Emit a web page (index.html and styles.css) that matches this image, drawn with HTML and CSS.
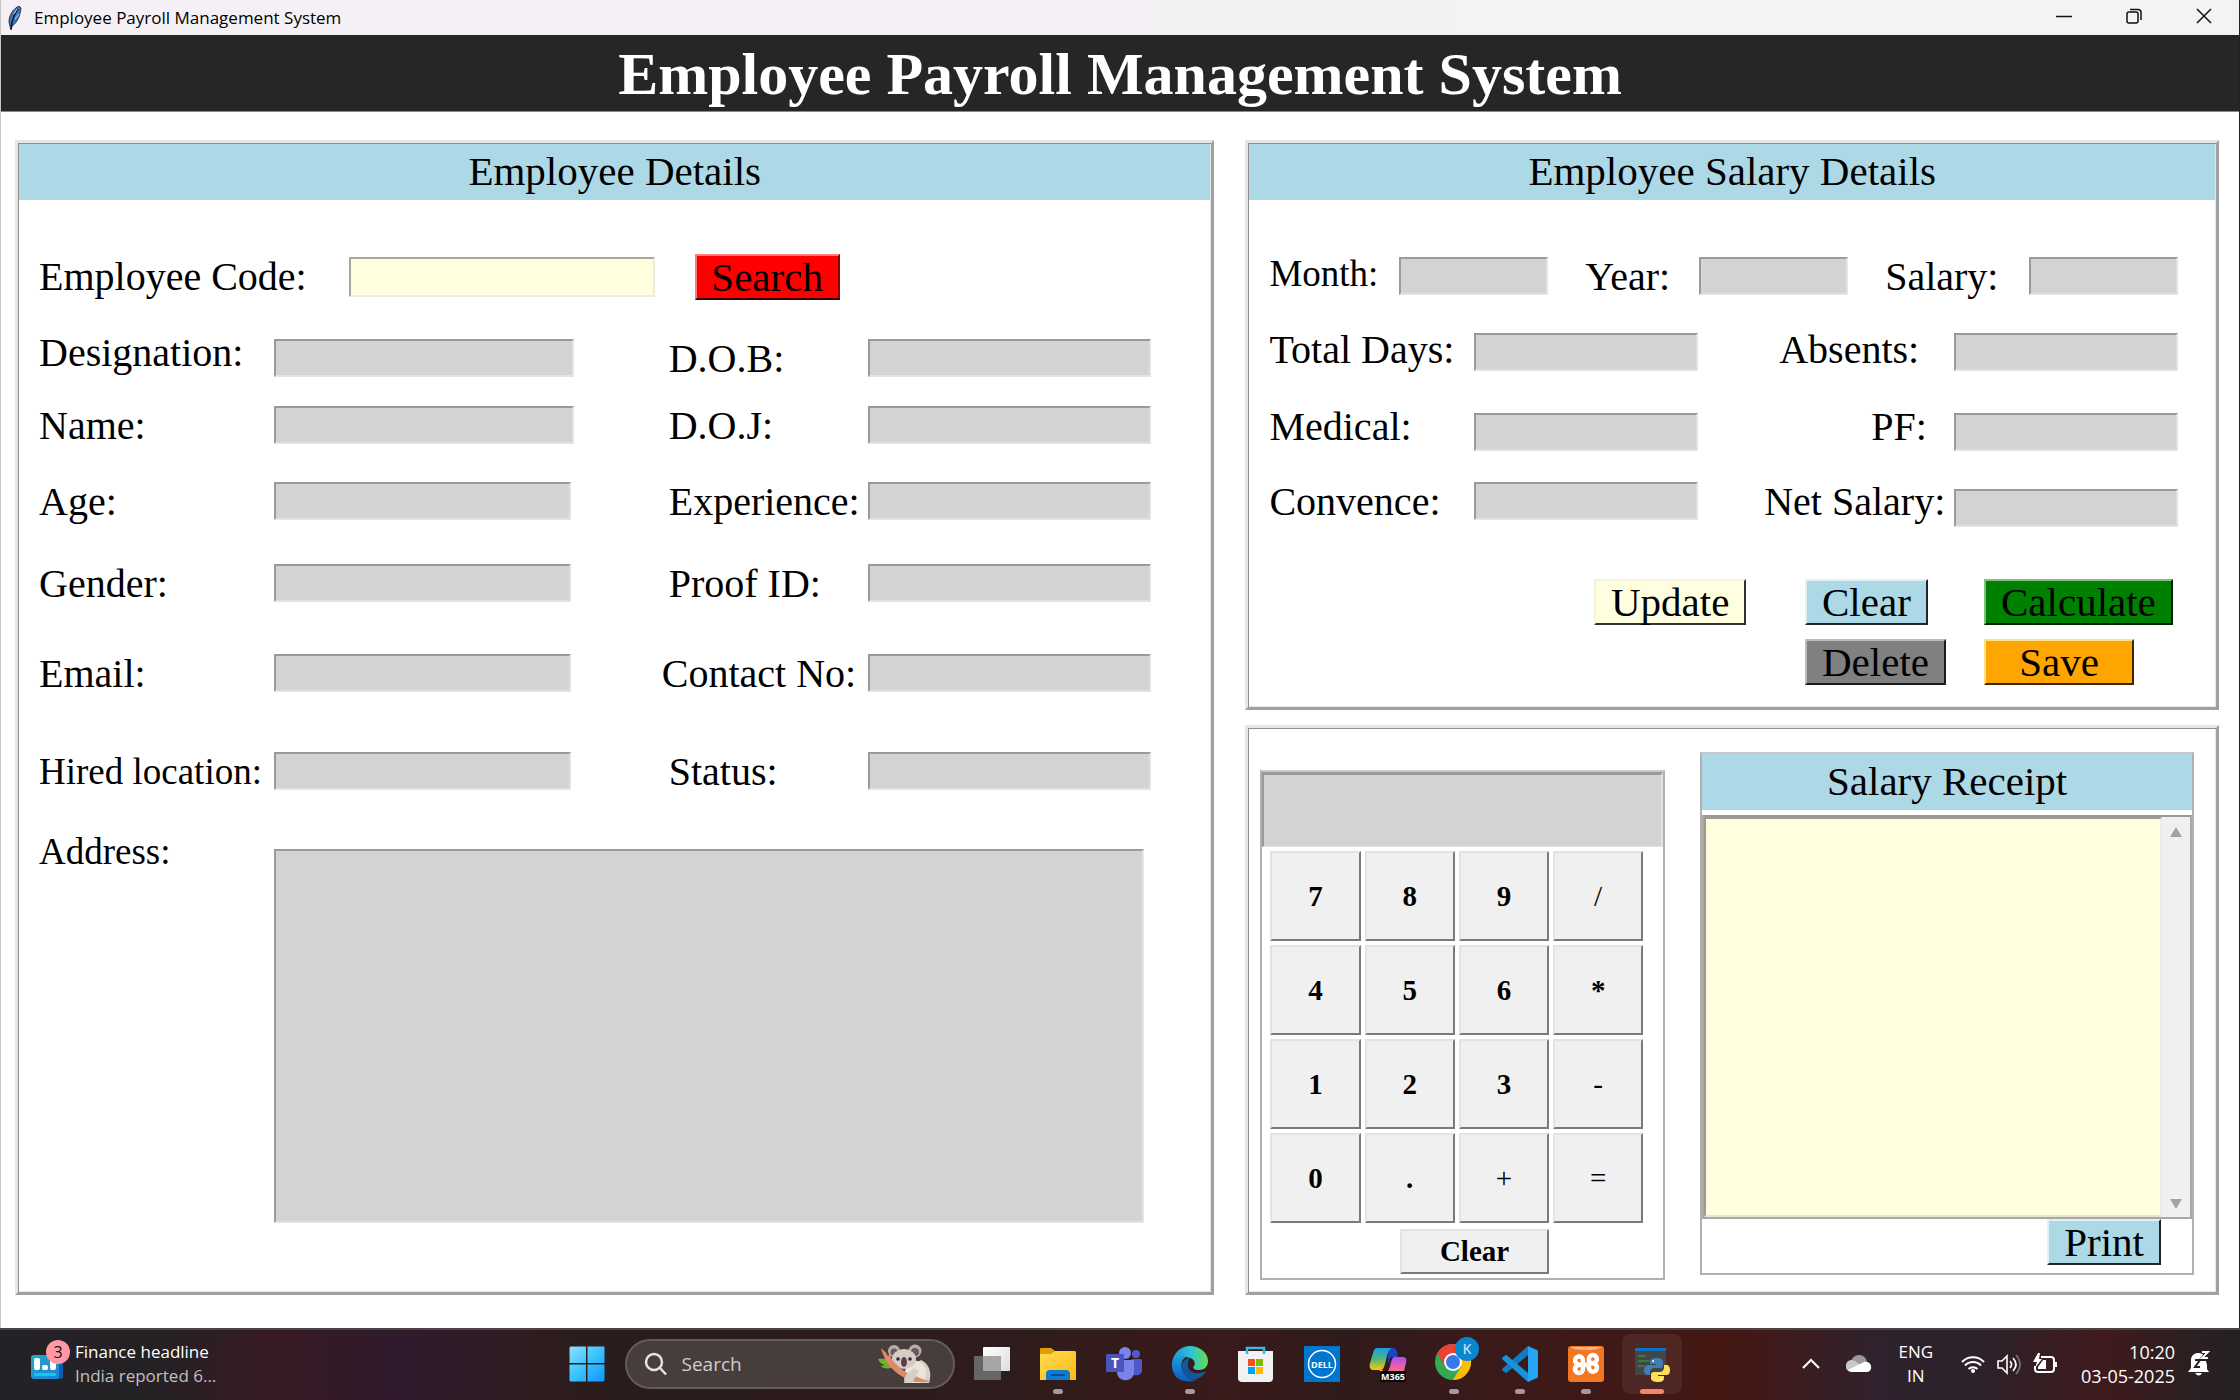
FILE: index.html
```html
<!DOCTYPE html>
<html lang="en">
<head>
<meta charset="utf-8">
<title>Employee Payroll Management System</title>
<link rel="stylesheet" href="styles.css">
</head>
<body>
<div class="window">
  <div class="titlebar">
    <svg class="feather" viewBox="0 0 16 24"><path d="M12 0C6 3 2 9 2 16l1 4 1 4 1-4c5-3 8-10 9-18z" fill="#3c79c4" stroke="#2a3340"/><path d="M11 3C7 8 5 14 4 23" fill="none" stroke="#101820" stroke-width="1.5"/><path d="M10 3L7 8M12 8l-4 5" stroke="#b6d4f3"/></svg>
    <span class="titlebar-text">Employee Payroll Management System</span>
    <div class="window-controls">
      <button aria-label="Minimize"><svg viewBox="0 0 16 16"><path d="M0 8.500h16"/></svg></button>
      <button aria-label="Restore"><svg viewBox="0 0 16 16"><rect x="1" y="4" width="11" height="11" rx="2"/><path d="M4 1.500h8a3 3 0 0 1 3 3V12"/></svg></button>
      <button aria-label="Close"><svg viewBox="0 0 16 16"><path d="M1 1l14 14M15 1L1 15"/></svg></button>
    </div>
  </div>

  <h1 class="banner">Employee Payroll Management System</h1>

  <main class="content">
    <section class="panel">
      <h2 class="band">Employee Details</h2>
      <div class="code-row">
        <label for="code">Employee Code:</label>
        <input id="code" class="code-input" type="text">
        <button class="btn red">Search</button>
      </div>
      <div class="details">
        <label class="raised" for="designation">Designation:</label><input id="designation" type="text">
        <label class="second" for="dob">D.O.B:</label><input id="dob" type="text">
        <label for="name">Name:</label><input id="name" type="text">
        <label class="second" for="doj">D.O.J:</label><input id="doj" type="text">
        <label for="age">Age:</label><input id="age" class="narrow" type="text">
        <label class="second" for="experience">Experience:</label><input id="experience" type="text">
        <label for="gender">Gender:</label><input id="gender" class="narrow" type="text">
        <label class="second" for="proof">Proof ID:</label><input id="proof" type="text">
        <label for="email">Email:</label><input id="email" class="narrow" type="text">
        <label class="second wide" for="contact">Contact No:</label><input id="contact" type="text">
        <label class="small" for="hired">Hired location:</label><input id="hired" class="narrow" type="text">
        <label class="second" for="status">Status:</label><input id="status" type="text">
        <label class="small" for="address">Address:</label><textarea id="address" class="address"></textarea>
      </div>
    </section>

    <div class="side">
      <section class="panel">
        <h2 class="band">Employee Salary Details</h2>
        <div class="period">
          <label class="small middle" for="month">Month:</label><input id="month" type="text">
          <label class="next" for="year">Year:</label><input id="year" type="text">
          <label class="next" for="salary">Salary:</label><input id="salary" type="text">
        </div>
        <div class="amounts">
          <label class="middle" for="days">Total Days:</label><input id="days" type="text">
          <label class="middle absents" for="absents">Absents:</label><input id="absents" type="text">
          <label class="raised" for="medical">Medical:</label><input id="medical" type="text">
          <label class="raised pf" for="pf">PF:</label><input id="pf" type="text">
          <label for="convence">Convence:</label><input id="convence" type="text">
          <label class="net" for="net">Net Salary:</label><input id="net" class="lower" type="text">
        </div>
        <div class="actions">
          <button class="btn yellow update">Update</button>
          <button class="btn blue">Clear</button>
          <button class="btn green">Calculate</button>
          <button class="btn gray delete">Delete</button>
          <button class="btn orange save">Save</button>
        </div>
      </section>

      <section class="panel tools">
        <div class="frame calculator">
          <input class="display" type="text" aria-label="Calculator display">
          <div class="keys">
            <button>7</button><button>8</button><button>9</button><button class="sign">/</button>
            <button>4</button><button>5</button><button>6</button><button>*</button>
            <button>1</button><button>2</button><button>3</button><button class="sign">-</button>
            <button>0</button><button>.</button><button class="sign">+</button><button class="sign">=</button>
            <button class="clear">Clear</button>
          </div>
        </div>
        <div class="frame receipt">
          <h2 class="band">Salary Receipt</h2>
          <div class="receipt-box">
            <textarea aria-label="Salary Receipt"></textarea>
            <div class="scrollbar">
              <svg viewBox="0 0 12 10"><path d="M6 0l6 10H0z" fill="#a3a3a3"/></svg>
              <svg viewBox="0 0 12 10"><path d="M0 0h12L6 10z" fill="#a3a3a3"/></svg>
            </div>
          </div>
          <button class="btn blue print">Print</button>
        </div>
      </section>
    </div>
  </main>
</div>

<footer class="taskbar">
  <div class="widget">
    <svg class="news" viewBox="0 0 42 44"><path d="M27 14h4a2 2 0 0 1 2 2v20a3 3 0 0 1-3 3h-4z" fill="#0b5cad"/><rect x="1" y="15" width="28" height="24" rx="3" fill="url(#news)"/><rect x="4" y="18" width="6" height="12" rx="2" fill="#fff"/><rect x="12" y="25" width="6" height="5" rx="2" fill="#fff"/><rect x="20" y="20" width="6" height="10" rx="2" fill="#fff"/><rect x="4" y="33" width="22" height="3" rx="1" fill="#12c8ee"/><circle cx="28" cy="12" r="12" fill="#ff99a4"/><text x="28" y="18" font-size="16" text-anchor="middle" fill="#111">3</text>
      <defs><linearGradient id="news" x1="0" y1="0" x2="1" y2="1"><stop stop-color="#2aa7c4"/><stop offset="1" stop-color="#1b82d8"/></linearGradient></defs></svg>
    <div class="headline"><span>Finance headline</span><span class="muted">India reported 6...</span></div>
  </div>

  <div class="apps">
    <button class="app" aria-label="Start"><svg viewBox="0 0 36 36"><defs><linearGradient id="win" x1="0" y1="0" x2="1" y2="1"><stop stop-color="#8ce2ff"/><stop offset=".5" stop-color="#3ac3fb"/><stop offset="1" stop-color="#0f95ff"/></linearGradient></defs><path d="M1.500.5H17V17H.5V1.500zM18.500.5H35l.5 1V17h-17zM.5 18.500H17v17H1.500l-1-1zM18.500 18.500h17v16l-1 1h-16z" fill="url(#win)"/></svg></button>

    <label class="search">
      <svg class="glass" viewBox="0 0 24 24"><circle cx="10" cy="10" r="8"/><path d="M16 16l6 6.500"/></svg>
      <input type="text" placeholder="Search" aria-label="Search">
      <svg class="koala" viewBox="0 0 56 40"><path d="M1 15c6-1 14 0 18 8-6 2-14 2-15-1l4-1c-4-1-6-3-7-6z" fill="#6cb52d"/><path d="M44 16c9 4 11 14 8 23H28l5-17z" fill="#d8cfc6"/><path d="M33 17c8-2 15 2 16 10 1 6-2 11-8 12H28c-2-7 0-17 5-22z" fill="#ece4da"/><circle cx="17" cy="7" r="6" fill="#b9aea5"/><circle cx="17" cy="8" r="3.500" fill="#685a60"/><circle cx="38" cy="7" r="6.500" fill="#b9aea5"/><circle cx="38" cy="8" r="4" fill="#685a60"/><ellipse cx="27" cy="15" rx="12" ry="10" fill="#d7cdc4"/><path d="M4 4c3 3 5 4 7 8l2-3c0 4 2 7 5 10 5 5 9 8 14 11 8 3 14 5 22 8h-16C24 34 9 24 4 4z" fill="#dd8a6c"/><ellipse cx="27" cy="18" rx="3" ry="5" fill="#5c4245"/><circle cx="21" cy="15" r="1.800" fill="#31253b"/><circle cx="33" cy="15" r="1.800" fill="#31253b"/><path d="M29 31l8-7 5 3-7 12h-8z" fill="#d8cfc6"/></svg>
    </label>

    <button class="app" aria-label="Task view"><svg viewBox="0 0 36 36"><defs><linearGradient id="tv" x1="0" y1="0" x2="1" y2="1"><stop stop-color="#fff"/><stop offset="1" stop-color="#ddd"/></linearGradient></defs><rect x="9" y="1" width="27" height="24" rx="1" fill="url(#tv)"/><rect x="0" y="10" width="27" height="24" rx="1" fill="#666"/><path d="M9 10h18v15H9z" fill="#a5a5a5"/></svg></button>
    <button class="app open" aria-label="File Explorer"><svg viewBox="0 0 36 36"><defs><linearGradient id="fe" x1="0" y1="0" x2="1" y2="1"><stop stop-color="#ffdb57"/><stop offset="1" stop-color="#fdb912"/></linearGradient></defs><path d="M0 3q0-1 1-1h10l4 3v6H0z" fill="#e0a000"/><path d="M0 8h11l4-3h20l1 1v28H0z" fill="url(#fe)"/><path d="M6 34v-6q0-4 4-4h16q4 0 4 4v6z" fill="#0c7bd0"/><path d="M11 29h14" stroke="#0a4d94" stroke-width="2"/></svg></button>
    <button class="app" aria-label="Teams"><svg viewBox="0 0 36 36"><circle cx="30" cy="8" r="4" fill="#5059c9"/><path d="M26 13h8q2 0 2 2v9c0 4-3 6-9 5z" fill="#5059c9"/><circle cx="19" cy="7" r="6" fill="#7b83eb"/><path d="M11 14h17v12c0 11-17 11-17 0z" fill="#7b83eb"/><rect y="8" width="18" height="18" rx="1" fill="#4b53bc"/><text x="9" y="22" font-size="14" font-weight="700" text-anchor="middle" fill="#fff">T</text></svg></button>
    <button class="app open" aria-label="Edge"><svg viewBox="0 0 36 36"><defs><linearGradient id="e1"><stop stop-color="#2390de"/><stop offset=".5" stop-color="#2bc1d8"/><stop offset="1" stop-color="#62e04c"/></linearGradient><linearGradient id="e2" x1="0" y1="0" x2="0" y2="1"><stop stop-color="#1f9de0"/><stop offset="1" stop-color="#0a5cb8"/></linearGradient></defs><path d="M0 17C1 7 9 0 18 0c10 0 18 7 18 15 0 5-3 9-9 9-5 0-7-2-5-4 2-3 0-7-4-8C10 9 3 12 0 17z" fill="url(#e1)"/><path d="M0 17c2-6 8-8 14-6-6 3-6 12-1 18 4 4 9 6 14 4-12 6-28 2-27-16z" fill="url(#e2)"/><path d="M18 12c-9 0-11 12-4 18 5 5 14 4 19-3 1-1 0-2-2-1-7 3-16 0-15-8 0-2 1-5 2-6z" fill="#14569c"/></svg></button>
    <button class="app" aria-label="Microsoft Store"><svg viewBox="0 0 36 36"><path d="M9 8V2h17v6" fill="none" stroke="#35b8ea" stroke-width="2.500"/><path d="M0 5h35v27q0 4-4 4H4q-4 0-4-4z" fill="#f1f1f1"/><path d="M9 8V5M26 8V5" stroke="#35b8ea" stroke-width="2.500"/><path d="M10 13h7v7h-7z" fill="#f25022"/><path d="M18 13h7v7h-7z" fill="#7fba00"/><path d="M10 21h7v7h-7z" fill="#00a4ef"/><path d="M18 21h7v7h-7z" fill="#ffb900"/></svg></button>
    <button class="app" aria-label="Dell"><svg viewBox="0 0 36 36"><path d="M0 0h36v36H0z" fill="#0076ce"/><circle cx="18" cy="18" r="13.500" fill="none" stroke="#fff" stroke-width="1.500"/><text x="18" y="22" font-size="9" font-weight="700" text-anchor="middle" fill="#fff">DELL</text></svg></button>
    <button class="app" aria-label="Microsoft 365"><svg viewBox="0 0 36 36"><defs><linearGradient id="m1" x1="0" y1="0" x2="0" y2="1"><stop stop-color="#1a9ce8"/><stop offset=".5" stop-color="#4fb77c"/><stop offset="1" stop-color="#ffc800"/></linearGradient><linearGradient id="m2" x1="0" y1="0" x2="0" y2="1"><stop stop-color="#b04cf0"/><stop offset="1" stop-color="#ff6a88"/></linearGradient></defs><path d="M18 2h5c4 0 4 4 5 9h-6c-3 0-3 5-4 8z" fill="#1b44c8"/><path d="M8 2h15c-4 0-5 4-7 12-2 9-3 10-7 10H3c-3 0-4-3-3-7l3-10c1-4 2-5 5-5z" fill="url(#m1)"/><path d="M24 11h9c3 0 4 2 3 6l-2 8H18c3-4 3-14 6-14z" fill="url(#m2)"/><path d="M9 24l4 4V24z" fill="#ff8a50"/><rect x="10" y="25" width="26" height="11" rx="2" fill="#080808"/><text x="23" y="34" font-size="9" font-weight="700" text-anchor="middle" fill="#fff">M365</text></svg></button>
    <button class="app open" aria-label="Chrome"><svg class="chrome" viewBox="0 0 46 46"><circle cx="18" cy="25" r="18" fill="#34a853"/><path d="M2.400 16A18 18 0 0 1 33.600 16H18l-8 14z" fill="#ea4335"/><path d="M33.600 16A18 18 0 0 1 18 43l8-13.500L18 16z" fill="#fbbc04"/><circle cx="18" cy="25" r="9" fill="#fff"/><circle cx="18" cy="25" r="7" fill="#3b78e7"/><circle cx="32" cy="12" r="12" fill="#0a85cf"/><text x="32" y="17" font-size="14" font-weight="600" text-anchor="middle" fill="#b9dcf3">K</text></svg></button>
    <button class="app open" aria-label="Visual Studio Code"><svg viewBox="0 0 36 36"><path d="M26 0l9 4q1 .5 1 2v24q0 1.500-1 2l-9 4z" fill="#27a5f2"/><path d="M26 0v9L5 26.500q-1 1-2 0l-2.500-2q-1-1 0-2z" fill="#0f7cc4"/><path d="M26 36v-9L5 9.500q-1-1-2 0l-2.500 2q-1 1 0 2z" fill="#1a90dc"/></svg></button>
    <button class="app open" aria-label="XAMPP"><svg viewBox="0 0 36 36"><rect width="36" height="36" rx="3" fill="#f37623"/><path d="M3 1h30q-1 3-15 3T3 1z" fill="#f9b78c"/><path d="M14 19h-3a4 4 0 1 0 4 4v-8a4 4 0 1 0-7 2q2 2 6 2M14 19h8M22 17h3a4 4 0 1 0-4-3v8a4 4 0 1 0 7-3q-2-2-6-2" fill="none" stroke="#fff" stroke-width="4.500" stroke-linejoin="round"/></svg></button>
    <button class="app open active" aria-label="Python"><svg viewBox="0 0 36 36"><path d="M1 2h31v27H1z" fill="#454545"/><path d="M1 2h31v3H1z" fill="#0b74c8"/><path d="M4 10h8M4 15h11M4 20h6" stroke="#2f8f3a" stroke-width="1.500"/><path d="M22 12c-5 0-6 2-6 4v2h6v1h-8c-3 0-4 3-4 5s1 5 4 5h2v-3c0-2 2-4 4-4h6c2 0 3-1 3-3v-3c0-3-3-4-7-4z" fill="#3f7fb5"/><path d="M24 36c5 0 6-2 6-4v-2h-6v-1h8c3 0 4-2 4-5s-1-5-4-5h-2v3c0 2-2 4-4 4h-6c-2 0-3 1-3 3v3c0 3 3 4 7 4z" fill="#ffdf5a"/><circle cx="19" cy="15" r="1" fill="#fff"/><circle cx="27" cy="33" r="1" fill="#fff"/></svg></button>
  </div>

  <div class="tray">
    <svg class="chevron" viewBox="0 0 18 12"><path d="M1 10l8-8 8 8" fill="none" stroke="#fff" stroke-width="2"/></svg>
    <svg class="cloud" viewBox="0 0 26 18"><circle cx="13" cy="8" r="8" fill="#999"/><path d="M5 17a6 6 0 1 1 4-11l14 10z" fill="#c9c9c9"/><path d="M2 15L18 7c5-1 8 3 7 7-1 2-2 3-4 3H5z" fill="#fff"/></svg>
    <div class="lang"><span>ENG</span><span>IN</span></div>
    <svg class="status" viewBox="0 0 24 24"><g fill="none" stroke="#fff" stroke-width="2"><path d="M1 10a15 15 0 0 1 22 0M4 13.500a11 11 0 0 1 16 0M7.500 17a6.500 6.500 0 0 1 9 0"/></g><circle cx="12" cy="19" r="2" fill="#fff"/></svg>
    <svg class="status" viewBox="0 0 24 24"><g fill="none" stroke="#fff" stroke-width="1.600"><path d="M1 9h4l5-5v17l-5-5H1z"/><path d="M13 9q3 3.500 0 7M16 6q6 6.500 0 13"/><path d="M19 3q8 9.500 0 19" stroke="#777"/></g></svg>
    <svg class="status" viewBox="0 0 24 24"><path d="M8 5h10q3 0 3 3v9q0 3-3 3H5q-3 0-3-3v-3" fill="none" stroke="#fff" stroke-width="2"/><path d="M22 10h2v5h-2zM5 17v-2l5-7h3v9zM5 1L0 10h4l-2 6 7-9H6l1-6z" fill="#fff"/></svg>
    <div class="clock"><span>10:20</span><span>03-05-2025</span></div>
    <svg class="bell" viewBox="0 0 22 26"><path d="M3 9c0-9 13-9 14-2l2 7v4l2 3H0l3-4z" fill="#fff"/><path d="M7 22h7q-3 5-7 0z" fill="#fff"/><path d="M7 9h5l-5 7h5" fill="none" stroke="#2b2022" stroke-width="2"/><path d="M14 1h6l-6 7h6" fill="none" stroke="#2b2022" stroke-width="4"/><path d="M14 1h6l-6 6h6" fill="none" stroke="#fff" stroke-width="1.800"/></svg>
  </div>
</footer>
</body>
</html>
```
FILE: styles.css
```css
* { box-sizing: border-box; }

body {
  margin: 0;
  min-height: 100vh;
  display: flex;
  flex-direction: column;
  background: #fff;
  color: #000;
  font-family: "Liberation Serif", "Times New Roman", serif;
  font-size: 40px;
}

h1, h2 { margin: 0; }

input, textarea, button {
  margin: 0;
  font-family: inherit;
  color: inherit;
  border-radius: 0;
}

.window {
  flex: 1;
  display: flex;
  flex-direction: column;
  border-left: 1px solid #c4c4c4;
  border-right: 1px solid #222;
}

/* Title bar */
.titlebar {
  height: 35px;
  display: flex;
  align-items: center;
  gap: 11px;
  padding-left: 6px;
  background: linear-gradient(90deg, #f5f0f6, #f5f0f6 45%, #f3f3f3 65%);
  font-family: "Open Sans", sans-serif;
  font-size: 17px;
}

.feather { width: 16px; height: 24px; }

.window-controls {
  margin-left: auto;
  display: flex;
}

.window-controls button {
  width: 70px;
  height: 35px;
  padding: 0;
  border: 0;
  background: none;
}

.window-controls svg {
  width: 16px;
  height: 16px;
  fill: none;
  stroke: #111;
  stroke-width: 1.500;
}

.banner {
  height: 77px;
  border-bottom: 1px solid #8a8a8a;
  background: #262626;
  color: #fff;
  font-size: 60px;
  font-weight: bold;
  line-height: 79px;
  text-align: center;
}

/* Panels */
.content {
  flex: 1;
  display: grid;
  grid-template-columns: 1200fr 974fr;
  column-gap: 31px;
  padding: 28px 20px 33px 14px;
}

.side {
  display: grid;
  grid-template-rows: auto 1fr;
  row-gap: 15px;
}

.panel {
  padding: 1px;
  border: 3px solid;
  border-color: #e6e6e6 #a0a0a0 #a0a0a0 #e6e6e6;
  box-shadow: inset 1px 1px #8f8f8f, inset -1px -1px #e6e6e6;
}

.band {
  height: 56px;
  background: #add8e6;
  font-size: 41px;
  font-weight: normal;
  line-height: 54px;
  text-align: center;
}

label { line-height: 40px; white-space: nowrap; }
label.raised { line-height: 28px; }
label.middle { line-height: 34px; }
label.small { font-size: 37px; }

.panel input {
  width: 100%;
  min-width: 0;
  height: 38px;
  padding: 0 4px;
  border: 2px solid;
  border-color: #9a9a9a #e3e3e3 #e3e3e3 #9a9a9a;
  background: #d3d3d3;
  font-size: 28px;
}

textarea {
  display: block;
  border: 2px solid;
  border-color: #9a9a9a #e3e3e3 #e3e3e3 #9a9a9a;
  font-size: 28px;
  resize: none;
}

/* Employee details */
.code-row {
  display: grid;
  grid-template-columns: 310px 305fr 40px 145px 370fr;
  align-items: center;
  padding: 54px 0 0 20px;
}

.panel .code-input {
  height: 40px;
  border-color: #a8a898 #ecece0 #ecece0 #a8a898;
  background: #ffffe0;
}

.code-row .btn { grid-column: 4; }

.details {
  display: grid;
  grid-template-columns: 235px 299fr 294px 283fr;
  grid-template-rows: 67px 76px 82px 90px 98px 80px auto;
  align-items: start;
  padding: 39px 59px 67px 20px;
}

.details .second { padding-left: 95px; }
.details .wide { padding-left: 88px; }
.panel .narrow { width: calc(100% - 3px); }

.address {
  grid-column: 2 / 5;
  width: calc(100% - 7px);
  height: 374px;
  margin-top: 17px;
  background: #d3d3d3;
}

/* Salary details */
.period {
  display: grid;
  grid-template-columns: 130px 1fr 151px 1fr 181px 1fr;
  align-items: start;
  height: 76px;
  margin: 57px 37px 0 20px;
}

.period .next { padding-left: 37px; }

.amounts {
  display: grid;
  grid-template-columns: 205px 1fr 256px 1fr;
  grid-template-rows: 80px 69px 97px;
  align-items: start;
  margin: 0 37px 0 20px;
}

.amounts .net { padding-left: 66px; }
.amounts .absents { padding-left: 81px; }
.amounts .pf { padding-left: 173px; }
.panel .lower { margin-top: 7px; }

.actions {
  display: grid;
  grid-template-columns: 211px 179px 194px;
  grid-template-rows: 46px 46px;
  row-gap: 14px;
  justify-content: end;
  justify-items: start;
  margin: 0 37px 21px 0;
}

.delete { grid-column: 2; }

.btn {
  height: 46px;
  padding: 0 15px;
  border: 2px solid;
  font-size: 41px;
  line-height: 42px;
}

.red { padding: 0 14px; border-color: #ff7a7a #800 #300 #ff7a7a; background: #f00; }
.yellow { border-color: #f3f3dc #33332c #33332c #f3f3dc; background: #ffffe0; }
.blue { border-color: #dff0f6 #1c272b #1c272b #dff0f6; background: #add8e6; }
.green { border-color: #7fc07f #001e00 #001e00 #7fc07f; background: #008000; }
.gray { border-color: #bcbcbc #1a1a1a #1a1a1a #bcbcbc; background: #808080; }
.orange { border-color: #ffe08a #3d2700 #3d2700 #ffe08a; background: #ffa500; }
.save { width: 150px; }

/* Calculator and receipt */
.tools {
  display: grid;
  grid-template-columns: 405fr 494fr;
  column-gap: 35px;
  align-items: start;
  padding: 1px 22px 11px 12px;
}

.frame {
  border: 2px solid;
  border-color: #c9c9c9 #b0b0b0 #b0b0b0 #b0b0b0;
}

.calculator { margin-top: 41px; }

.panel .display {
  display: block;
  height: 75px;
  border-width: 3px 2px 1px;
}

.keys {
  display: grid;
  grid-template-columns: repeat(4, 1fr);
  gap: 4px;
  padding: 4px 20px 4px 8px;
}

.keys button {
  height: 90px;
  padding: 0;
  border: 2px solid;
  border-color: #e3e3e3 #7a7a7a #7a7a7a #e3e3e3;
  background: #f0f0f0;
  font-size: 29px;
  font-weight: bold;
}

.keys .sign { font-weight: normal; }

.keys .clear {
  grid-column: 2 / 4;
  justify-self: end;
  width: 149px;
  height: 45px;
  margin-top: 2px;
}

.receipt { margin-top: 23px; }

.receipt-box {
  display: flex;
  height: 404px;
  margin-top: 5px;
  border: 2px solid;
  border-color: #9a9a9a #a8a8a8 #a8a8a8 #a8a8a8;
}

.receipt-box textarea {
  flex: 1;
  min-width: 0;
  border-color: #9c9c88 #ecece0 #e6e6cc #9c9c88;
  background: #ffffe0;
}

.scrollbar {
  width: 28px;
  display: flex;
  flex-direction: column;
  justify-content: space-between;
  align-items: center;
  padding: 10px 0 8px;
  background: #f0f0f0;
}

.scrollbar svg { width: 12px; height: 10px; }

.print {
  display: block;
  margin: 0 31px 8px auto;
}

/* Taskbar */
.taskbar {
  height: 72px;
  display: grid;
  grid-template-columns: 1fr auto 1fr;
  align-items: center;
  padding: 0 2px 2px 0;
  border-top: 2px solid #4b4444;
  background: linear-gradient(90deg, #232226 0, #242124 7%, #371a22 12%, #301a2e 18%, #2f1c20 24%, #2a1c1c 28%, #2f1c1c 45%, #381a19 55%, #2f1b1b 60%, #3a1a19 67%, #451712 77%, #2f222e 84%, #2c222b 88%, #3f1a1c 94%, #2b2022 98%, #241f20 100%);
  color: #fff;
  font-family: "Open Sans", sans-serif;
  font-size: 17px;
  line-height: 24px;
}

.widget {
  display: flex;
  gap: 3px;
  padding-left: 30px;
}

.news { width: 42px; height: 44px; }
.headline, .lang, .clock { display: flex; flex-direction: column; }
.muted { color: #c3bfc0; }

.apps { display: flex; align-items: center; }

.app {
  position: relative;
  width: 66px;
  height: 66px;
  display: grid;
  place-items: center;
  padding: 0;
  border: 0;
  background: none;
}

.app svg { width: 36px; height: 36px; overflow: visible; }
.app text { font-family: "Open Sans", sans-serif; }
.app .chrome { width: 46px; height: 46px; margin: 0 0 9px 9px; }

.app.open::after {
  content: "";
  position: absolute;
  bottom: 3px;
  left: 28px;
  width: 10px;
  height: 5px;
  border-radius: 3px;
  background: #a39a9a;
}

.app.active {
  width: 60px;
  height: 60px;
  margin: 0 3px;
  border-radius: 8px;
  background: #fff1;
}

.app.active::after {
  bottom: 0;
  left: 18px;
  width: 24px;
  background: #f9826c;
}

.search {
  width: 330px;
  height: 50px;
  display: flex;
  align-items: center;
  margin: 0 4px 0 5px;
  padding: 0 20px 0 17px;
  border: 2px solid #655b5b;
  border-radius: 25px;
  background: #473d3d;
}

.glass {
  width: 24px;
  height: 24px;
  fill: none;
  stroke: #e6e3e3;
  stroke-width: 2.500;
}

.search input {
  flex: 1;
  min-width: 0;
  padding: 0 0 0 14px;
  border: 0;
  background: none;
  font-family: inherit;
  font-size: 19px;
}

.search input::placeholder { color: #d2cccc; opacity: 1; }
.koala { width: 56px; height: 40px; }

.tray {
  display: flex;
  align-items: center;
  justify-content: end;
  padding-right: 28px;
}

.chevron { width: 18px; height: 12px; margin-right: 26px; }
.cloud { width: 26px; height: 18px; margin-right: 26px; }
.lang { margin-right: 28px; text-align: center; }
.status { width: 24px; height: 24px; margin-right: 12px; }
.clock { margin: 0 13px 0 12px; font-size: 18px; text-align: right; }
.bell { width: 22px; height: 26px; }
```
